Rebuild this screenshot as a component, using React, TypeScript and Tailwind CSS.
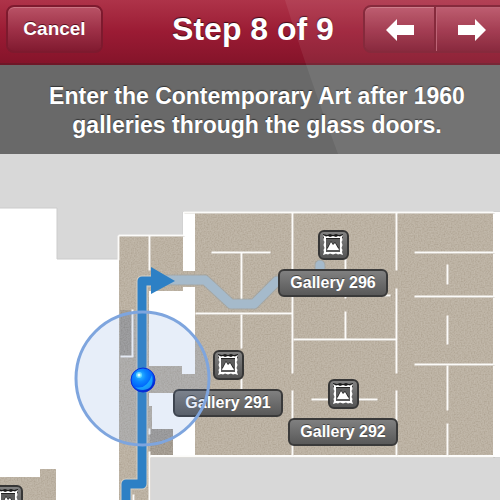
import type { ReactNode } from "react";

const TAN = "#bcb2a3";

// Wall segments of the gallery floor: x1, y1, x2, y2
const walls: [number, number, number, number][] = [
  [118, 235, 183, 235],
  [118, 235, 118, 260],
  [149, 235, 149, 270],
  [183, 212, 493, 212],
  [211, 252, 270, 252],
  [241, 252, 241, 299],
  [195, 313, 292, 313],
  [241, 314, 241, 348],
  [241, 378, 241, 400],
  [292, 212, 292, 373],
  [292, 390, 292, 456],
  [396, 212, 396, 270],
  [396, 288, 396, 373],
  [396, 390, 396, 456],
  [345, 258, 345, 298],
  [345, 311, 345, 339],
  [293, 339, 396, 339],
  [340, 295, 390, 295],
  [414, 252, 493, 252],
  [447, 264, 447, 284],
  [414, 296, 493, 296],
  [447, 315, 447, 344],
  [414, 364, 493, 364],
  [447, 365, 447, 410],
  [447, 423, 447, 456],
  [311, 399, 377, 399],
  [132, 309, 132, 356],
  [120, 356, 133, 356],
  [149, 428, 149, 434],
  [149, 451, 149, 500],
  [149, 456, 493, 456],
  [133, 494, 133, 500],
];

function FloorPlan() {
  return (
    <svg className="block h-[346px] w-[500px]" viewBox="0 154 500 346" aria-hidden="true">
      <defs>
        <filter id="weave" x="0" y="0" width="100%" height="100%" colorInterpolationFilters="sRGB">
          <feTurbulence type="fractalNoise" baseFrequency="0.7" numOctaves="1" seed="4" result="n" />
          <feColorMatrix in="n" type="matrix" values="0.4 0 0 0 0.3  0.4 0 0 0 0.3  0.4 0 0 0 0.3  0 0 0 0 1" result="g" />
          <feBlend in="g" in2="SourceGraphic" mode="soft-light" result="b" />
          <feComposite in="b" in2="SourceGraphic" operator="in" />
        </filter>
      </defs>
      <path d="M-2 150H502V212H183V235H118V259H57V208H-2Z" fill="#d8d8d8" stroke="#cccccc" />
      <path d="M150 457H502V502H150Z" fill="#d8d8d8" stroke="#cfcfcf" />
      <path d="M183 212H195V270H183ZM493 212H500V457H493Z" fill="#ffffff" />
      <g filter="url(#weave)">
        <path
          fill={TAN}
          d="M119 236H183V271H195V213H493V455H195V393H149V406H152V429H173V455H149V500H119ZM149 291V366H182V374H195V287H183V291Z"
          fillRule="evenodd"
        />
        <path fill="#a59d92" d="M120 310H132V356H120ZM150 429H173V455H150Z" />
        <path fill={TAN} d="M0 477H40V469H56V500H0Z" />
      </g>
      <g stroke="#8e8678" strokeOpacity=".3" strokeWidth="1">
        {walls.map(([x1, y1, x2, y2]) => (
          <line key={`${x1}-${y1}-${x2}-${y2}`} x1={x1 + 1.5} y1={y1 + 1.5} x2={x2 + 1.5} y2={y2 + 1.5} />
        ))}
      </g>
      <g stroke="#fcfbf9" strokeWidth="2">
        {walls.map(([x1, y1, x2, y2]) => (
          <line key={`${x1}-${y1}-${x2}-${y2}`} x1={x1 + 0.5} y1={y1 + 0.5} x2={x2 + 0.5} y2={y2 + 0.5} />
        ))}
      </g>
      <path d="M165 280H205L231 304H254L277 281M320 281V265" fill="none" stroke="#8f9ba2" strokeOpacity=".5" strokeWidth="11" strokeLinejoin="round" strokeLinecap="round" />
      <path d="M165 280H205L231 304H254L277 281M320 281V265" fill="none" stroke="#a5bacb" strokeWidth="9" strokeLinejoin="round" strokeLinecap="round" />
      <path d="M126 505V484H142V281H153" fill="none" stroke="#d6cfc4" strokeWidth="11" strokeLinejoin="round" />
      <path d="M126 505V484H142V281H153" fill="none" stroke="#2d80c5" strokeWidth="9" strokeLinejoin="round" />
      <path d="M151 267L175 281L151 294Z" fill="#2d80c5" />
    </svg>
  );
}

function LocationMarker() {
  return (
    <svg className="pointer-events-none absolute left-[74px] top-[156px] h-[138px] w-[138px]" viewBox="0 0 138 138" role="img" aria-label="Your location">
      <defs>
        <radialGradient id="ball" cx="38%" cy="32%" r="72%">
          <stop offset="0" stopColor="#35c4ff" />
          <stop offset=".35" stopColor="#0a86ff" />
          <stop offset=".7" stopColor="#0060fa" />
          <stop offset="1" stopColor="#0018c8" />
        </radialGradient>
      </defs>
      <circle cx="68.500" cy="68.500" r="66.500" fill="#5b8ad6" fillOpacity=".15" stroke="#7ea5de" strokeWidth="3" />
      <circle cx="69" cy="70" r="12" fill="url(#ball)" stroke="#0a2bd8" />
      <path d="M61 77Q73 80 78 65Q81 79 69 80Q64 80 61 77Z" fill="#27c6ff" fillOpacity=".65" />
      <circle cx="65" cy="65" r="3" fill="#7fe9ff" fillOpacity=".7" />
      <circle cx="65" cy="65" r="1.500" fill="#e2ffff" />
    </svg>
  );
}

function FrameIcon() {
  return (
    <svg className="size-[22px] shrink-0" viewBox="0 0 22 22" aria-hidden="true">
      <path d="M1 0L5 1L8 0L11 1L14 0L17 1L21 0V4H1Z" fill="#1a1a1a" />
      <path
        d="M1 1L4 2.500L6 2L8 3L11 2L14 3L16 2L18 2.500L21 1L20 4L20.500 6L19.500 8L20.500 11L19.500 14L20.500 16L20 18L21 21L18 20L16 20.500L14 19.500L11 20.500L8 19.500L6 20.500L4 20L1 21L2 18L1.500 16L2.500 14L1.500 11L2.500 8L1.500 6L2 4Z"
        fill="#ffffff"
      />
      <path d="M4 4H18V18H4Z" fill="#5c5c5c" />
      <path d="M4 4H18V5H4Z" fill="#222222" />
      <path d="M5 14L9 7L11 10L13 8L17 14Z" fill="#1f1f1f" />
      <path d="M5 16L9 8L11 11L13 9L17 16Z" fill="#ffffff" />
    </svg>
  );
}

const iconFace =
  "flex h-[30px] w-[31px] items-center justify-center rounded-[6px] border-2 border-[#363636] bg-linear-to-b from-[#828282] to-[#555555]";

function Pin({ label, place }: { label: string; place: string }) {
  return (
    <button type="button" className={`absolute flex w-[110px] flex-col items-center gap-[9px] ${place}`}>
      <span className={iconFace}>
        <FrameIcon />
      </span>
      <span className="flex h-[28px] w-full items-center justify-center rounded-[6px] border-2 border-[#3a3a3a] bg-linear-to-b from-[#808080] to-[#595959] text-[16px] leading-[20px] font-bold whitespace-nowrap text-white [text-shadow:0_-1px_0_#444]">
        {label}
      </span>
    </button>
  );
}

const buttonFace =
  "bg-linear-to-b from-[#b95266] via-[#9f3148] to-[#811a30] border-2 border-[#7d1a2e] shadow-[inset_0_1px_0_#cb7483]";

function ArrowButton({ label, edge, children }: { label: string; edge: string; children: ReactNode }) {
  return (
    <button type="button" aria-label={label} className={`flex h-[48px] items-center justify-center pt-[2px] ${buttonFace} ${edge}`}>
      <svg className="h-[22px] w-[28px]" viewBox="0 0 28 22" aria-hidden="true">
        {children}
      </svg>
    </button>
  );
}

export default function App() {
  return (
    <div className="flex min-h-screen flex-col overflow-hidden bg-white font-['Liberation_Sans',Arial,sans-serif]">
      <div className="relative">
        <header className="grid h-[65px] grid-cols-[1fr_auto_1fr] items-start border-b-2 border-[#6e1727] bg-linear-to-b from-[#ae3349] via-[#9b1b34] to-[#85142a] pt-[5px] pl-[6px]">
          <button type="button" className={`h-[48px] w-[97px] rounded-[8px] text-[19px] font-bold text-white [text-shadow:0_-1px_0_#5a1020] ${buttonFace}`}>
            Cancel
          </button>
          <h1 className="pt-[6px] text-[32px] leading-[36px] font-bold whitespace-nowrap text-white [text-shadow:0_-1px_1px_#3d0a15]">
            Step 8 of 9
          </h1>
          <nav className="-mr-[10px] flex justify-end" aria-label="Steps">
            <ArrowButton label="Previous step" edge="w-[73px] rounded-l-[8px]">
              <path d="M0 11L11 0V6H28V16H11V22Z" fill="#ffffff" />
            </ArrowButton>
            <ArrowButton label="Next step" edge="w-[74px] rounded-r-[8px] border-l-0 shadow-[inset_1px_1px_0_#b9596c]">
              <path d="M28 11L17 0V6H0V16H17V22Z" fill="#ffffff" />
            </ArrowButton>
          </nav>
        </header>
        <p className="flex h-[89px] items-center justify-center bg-[#696969] pt-[3px] pl-[14px] text-center text-[23px] leading-[29px] font-bold text-white [text-shadow:0_-1px_1px_#333]">
          Enter the Contemporary Art after 1960
          <br />
          galleries through the glass doors.
        </p>
        <svg className="pointer-events-none absolute inset-0 size-full" viewBox="0 0 500 154" preserveAspectRatio="none" aria-hidden="true">
          <path d="M285 0Q305 65 338 154H500V0Z" fill="#ffffff" fillOpacity=".07" />
        </svg>
      </div>
      <main className="relative w-[500px] overflow-hidden">
        <FloorPlan />
        <Pin label="Gallery 296" place="left-[278px] top-[76px]" />
        <Pin label="Gallery 291" place="left-[173px] top-[196px]" />
        <Pin label="Gallery 292" place="left-[288px] top-[225px]" />
        <button type="button" aria-label="Gallery" className={`absolute top-[331px] -left-[8px] ${iconFace}`}>
          <FrameIcon />
        </button>
        <LocationMarker />
      </main>
    </div>
  );
}
